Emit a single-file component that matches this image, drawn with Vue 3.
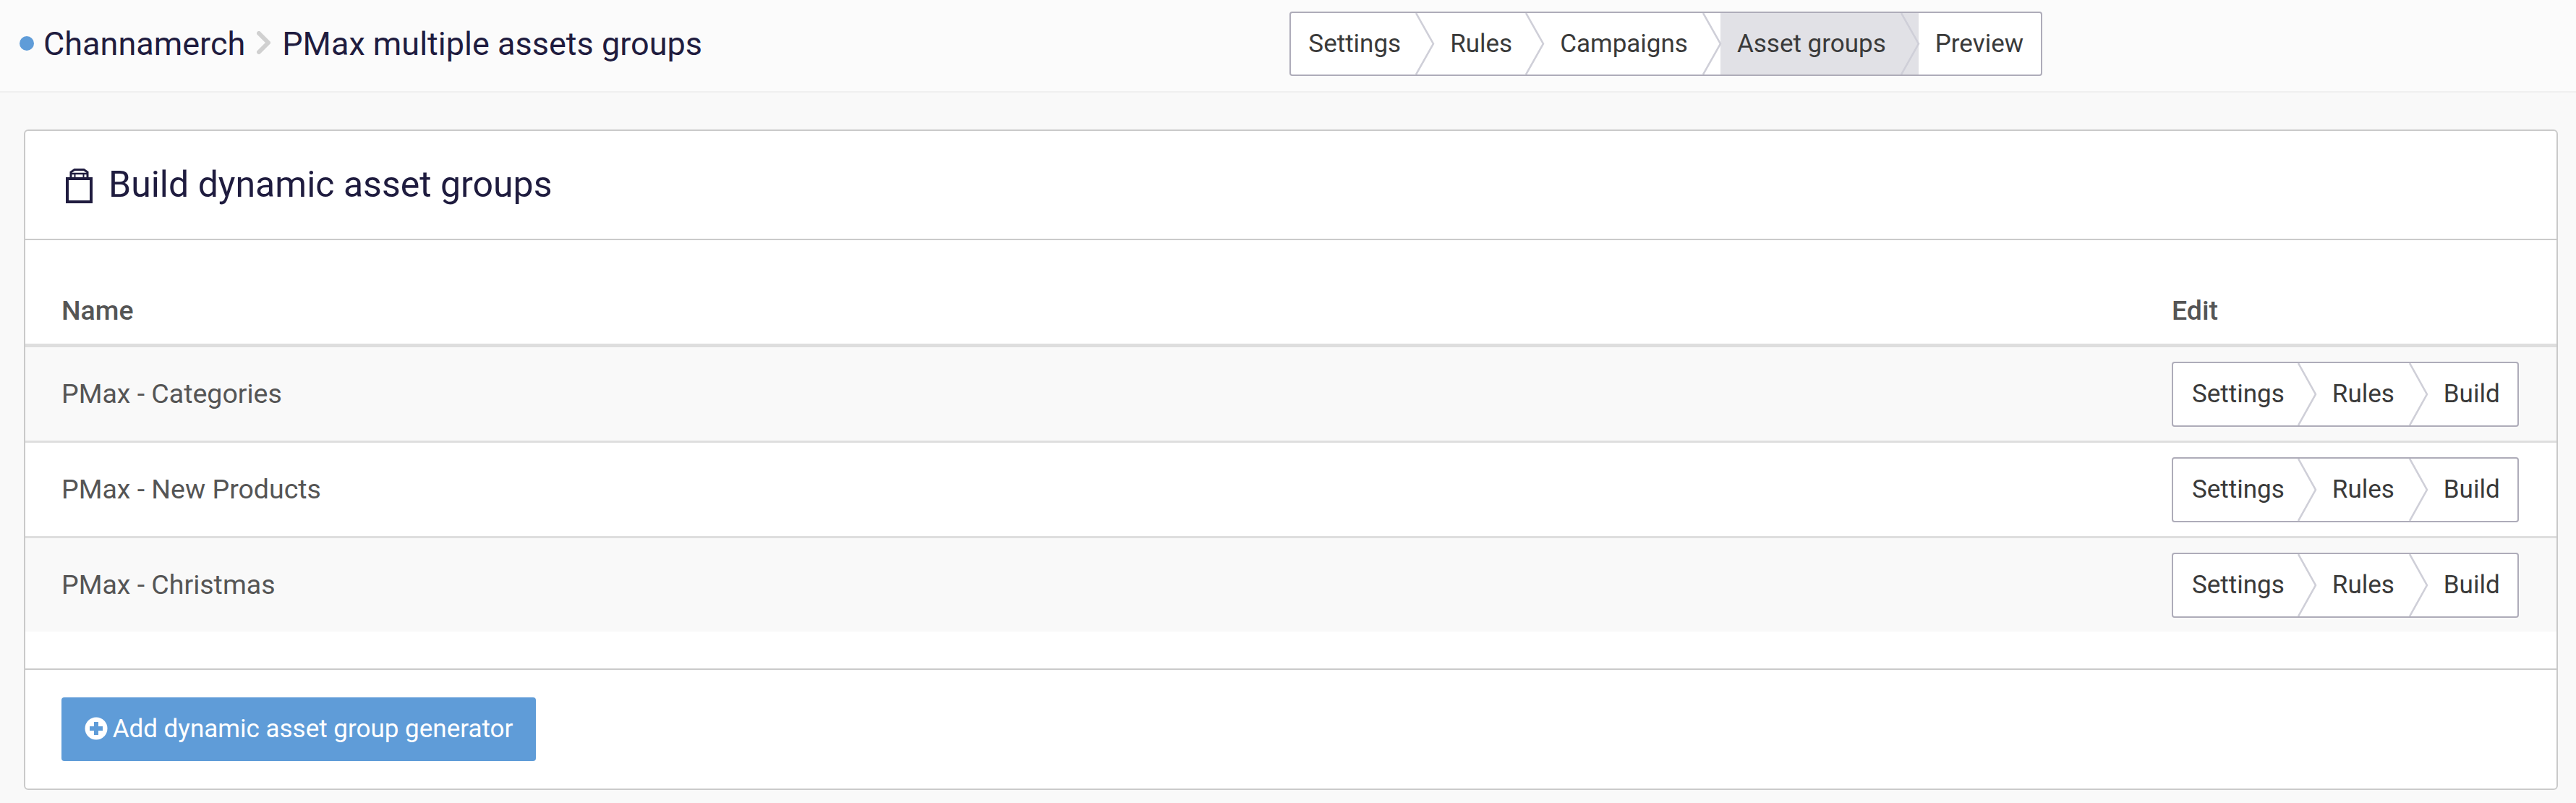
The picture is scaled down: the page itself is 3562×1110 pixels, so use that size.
<script setup>
const steps = [
  { label: 'Settings' },
  { label: 'Rules' },
  { label: 'Campaigns' },
  { label: 'Asset groups', active: true },
  { label: 'Preview' },
]
const rows = ['PMax - Categories', 'PMax - New Products', 'PMax - Christmas']
const editSteps = [{ label: 'Settings' }, { label: 'Rules' }, { label: 'Build' }]
</script>

<template>
  <div class="page">
    <header class="top">
      <div class="crumbs">
        <span class="dot"></span>
        <span class="crumb-a">Channamerch</span>
        <svg class="crumb-sep" width="19" height="32" viewBox="0 0 19 32"><path d="M3 3 L16 16 L3 29" fill="none" stroke="#d0d0d0" stroke-width="6" stroke-linecap="round" stroke-linejoin="round"/></svg>
        <span>PMax multiple assets groups</span>
      </div>
      <nav class="steps main-steps">
        <div v-for="(s, i) in steps" :key="s.label" class="step" :class="{ active: s.active, last: i === steps.length - 1 }">
          {{ s.label }}
          <svg v-if="i < steps.length - 1" class="chev" viewBox="0 0 28 84" preserveAspectRatio="none">
            <polygon points="0,0 2,0 26,42 2,84 0,84" :fill="s.active ? '#e1e1e6' : '#fff'"/>
            <polyline points="2,0 26,42 2,84" fill="none" stroke="#cfcfd8" stroke-width="2.5"/>
          </svg>
        </div>
      </nav>
    </header>

    <main class="content">
      <section class="card">
        <div class="card-head">
          <svg class="bag" width="37" height="48" viewBox="0 0 37 48">
            <path d="M2 14 H35 V46 H2 Z" fill="none" stroke="#1f1c3f" stroke-width="4"/>
            <path d="M7 12 V5 L12 1.5 H25 L30 5 V12" fill="none" stroke="#1f1c3f" stroke-width="3"/>
            <path d="M7 7 H30" stroke="#1f1c3f" stroke-width="2.5"/>
            <path d="M12.5 7 V12 M24.5 7 V12" stroke="#1f1c3f" stroke-width="2"/>
          </svg>
          <h1>Build dynamic asset groups</h1>
        </div>
        <div class="table-wrap">
          <div class="row head-row">
            <div class="name">Name</div>
            <div class="edit">Edit</div>
          </div>
          <div v-for="(r, idx) in rows" :key="r" class="row body-row" :class="{ odd: idx % 2 === 0, final: idx === rows.length - 1 }">
            <div class="name">{{ r }}</div>
            <div class="edit">
              <nav class="steps edit-steps">
                <div v-for="(s, i) in editSteps" :key="s.label" class="step" :class="{ last: i === editSteps.length - 1 }">
                  {{ s.label }}
                  <svg v-if="i < editSteps.length - 1" class="chev" viewBox="0 0 28 84" preserveAspectRatio="none">
                    <polyline points="2,0 26,42 2,84" fill="none" stroke="#cfcfd8" stroke-width="2.5"/>
                  </svg>
                </div>
              </nav>
            </div>
          </div>
        </div>
        <div class="card-foot">
          <button class="add">
            <svg width="32" height="32" viewBox="0 0 32 32"><circle cx="16" cy="16" r="15.5" fill="#fff"/><path d="M13 7 H19 V13 H25 V19 H19 V25 H13 V19 H7 V13 H13 Z" fill="#5f9cd8"/></svg>
            <span>Add dynamic asset group generator</span>
          </button>
        </div>
      </section>
    </main>
  </div>
</template>

<style>
html, body { margin: 0; padding: 0; background: #f9f9f9; }
</style>

<style scoped>
.page {
  width: 3562px;
  height: 1110px;
  overflow: hidden;
  background: #f9f9f9;
  font-family: Roboto, "Liberation Sans", sans-serif;
  box-sizing: border-box;
}
.top {
  height: 128px;
  box-sizing: border-box;
  background: #fbfbfb;
  border-bottom: 2px solid #f0f0f0;
  display: flex;
  align-items: center;
  padding-left: 27px;
  padding-bottom: 6px;
}
.crumbs {
  display: flex;
  align-items: center;
  font-size: 45px;
  color: #1f1c3f;
  gap: 16px;
  line-height: 1;
}
.dot { width: 20px; height: 20px; border-radius: 50%; background: #5f9cd8; margin-right: -3px; }
.crumb-sep { margin-top: -2px; }
.steps {
  display: inline-flex;
  background: #fff;
  border: 2px solid #aeacb9;
  border-radius: 4px;
  height: 90px;
  box-sizing: border-box;
  overflow: hidden;
  font-size: 35px;
  color: #3a3a3a;
}
.main-steps { margin-left: auto; margin-right: 738px; height: 89px; }
.step {
  position: relative;
  display: flex;
  align-items: center;
  padding: 0 45px 0 23px;
  white-space: nowrap;
}
.step:first-child { padding-left: 24px; }
.step.last { padding-right: 24px; }
.main-steps .step:nth-child(2) { padding-right: 43px; }
.edit-steps .step:first-child { padding: 0 43px 0 26px; }
.step.active { background: #e1e1e6; }
.chev {
  position: absolute;
  right: -2px;
  top: 0;
  width: 28px;
  height: 100%;
  z-index: 1;
}
.content { padding: 51px 25px 0 33px; }
.card {
  background: #fff;
  border: 2px solid #cacaca;
  border-radius: 6px;
  height: 913px;
  box-sizing: border-box;
  display: flex;
  flex-direction: column;
}
.card-head {
  height: 151px;
  box-sizing: border-box;
  border-bottom: 2px solid #cacaca;
  display: flex;
  align-items: center;
  padding-left: 56px;
  gap: 22px;
}
.bag { margin-top: 3px; }
.card-head h1 {
  margin: 0 0 2px;
  font-weight: 400;
  font-size: 50px;
  color: #1f1c3f;
}
.table-wrap { flex: 0 0 auto; }
.row { display: flex; align-items: center; padding: 0 51px 0 50px; }
.name { flex: 1; }
.edit { width: 481px; }
.head-row {
  height: 148px;
  box-sizing: border-box;
  padding-top: 50px;
  font-size: 37.5px;
  font-weight: 500;
  color: #555;
  border-bottom: 5px solid #dedede;
}
.body-row {
  height: 132px;
  box-sizing: border-box;
  font-size: 37.5px;
  color: #555;
  border-bottom: 3px solid #dedede;
}
.body-row .name { padding-bottom: 2px; }
.body-row.odd { background: #f9f9f9; }
.body-row.final { border-bottom: 0; height: 129px; }
.card-foot {
  margin-top: 51px;
  border-top: 2px solid #cacaca;
  padding: 38px 50px 0;
}
.add {
  width: 656px;
  height: 88px;
  background: #5f9cd8;
  border: 0;
  border-radius: 4px;
  color: #fff;
  font: 400 35px Roboto, sans-serif;
  display: flex;
  align-items: center;
  justify-content: center;
  gap: 7px;
  padding: 0 0 2px;
}
</style>
